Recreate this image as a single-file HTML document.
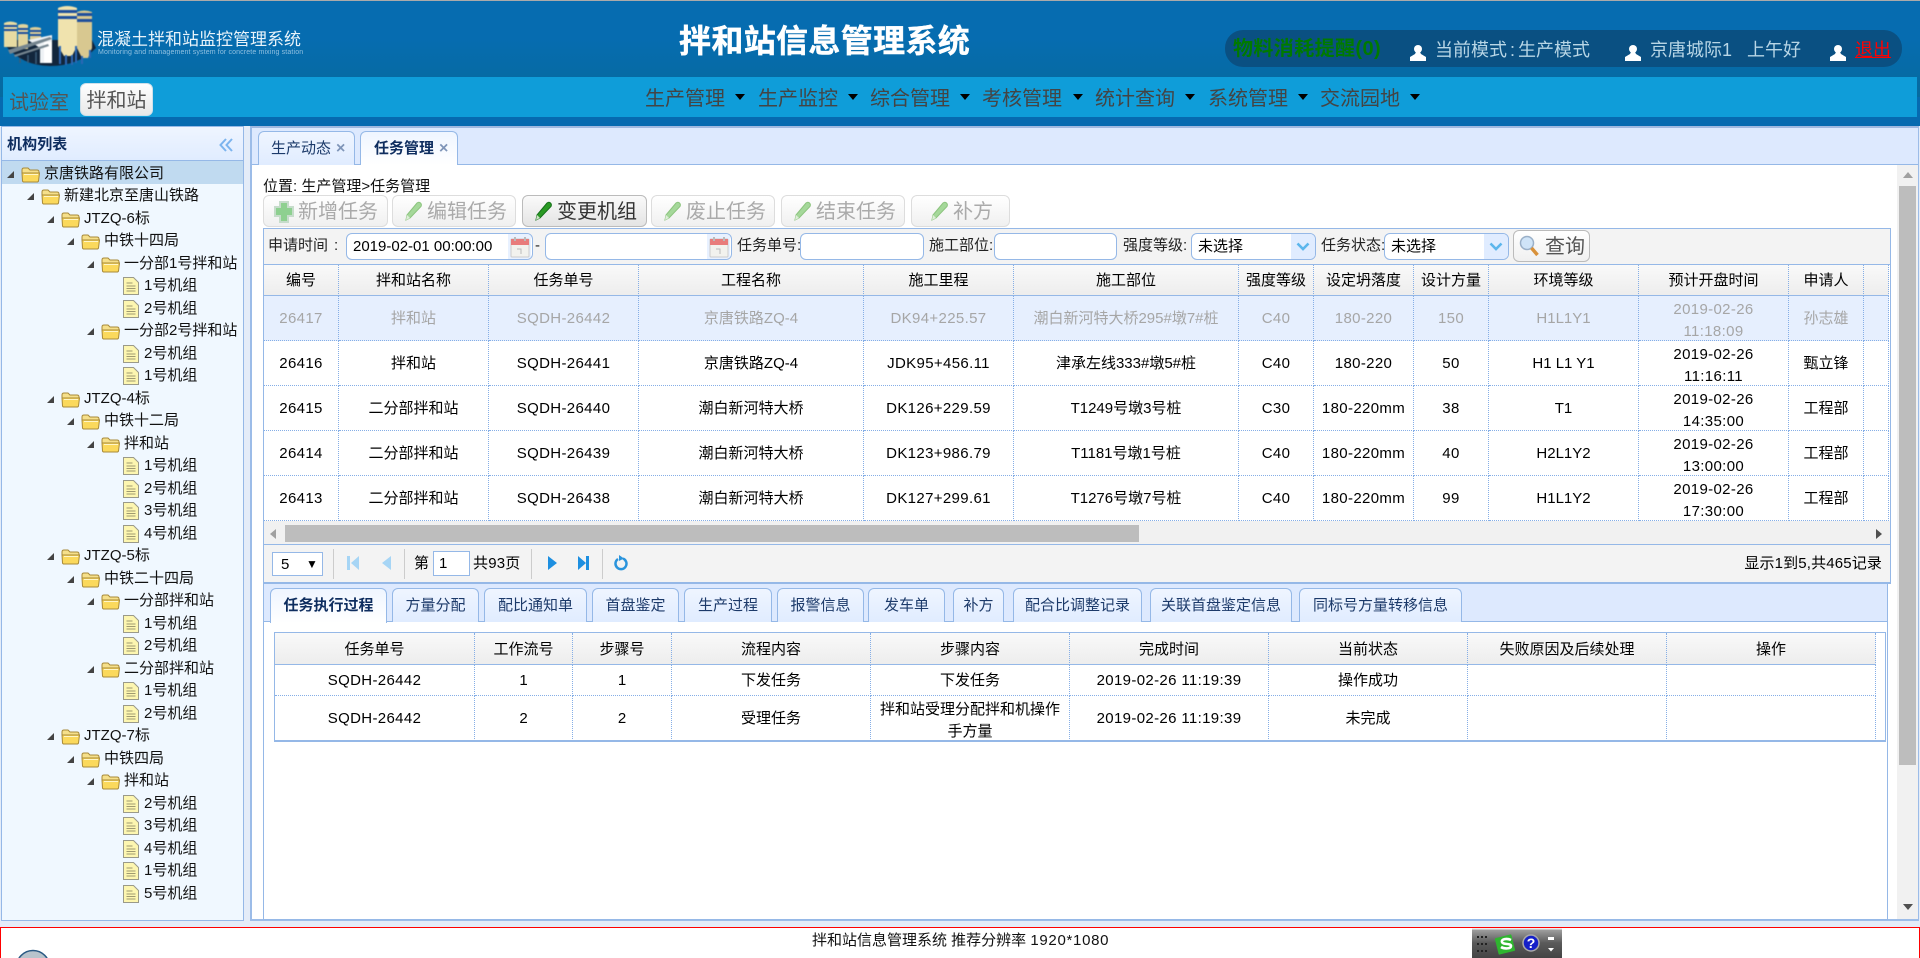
<!DOCTYPE html>
<html lang="zh-CN"><head><meta charset="utf-8"><title>拌和站信息管理系统</title>
<style>
*{box-sizing:border-box}
html,body{margin:0;padding:0}
body{width:1920px;height:958px;overflow:hidden;position:relative;background:#e4ecf8;font-family:"Liberation Sans","Noto Sans CJK SC",sans-serif;font-size:15px;color:#000}
.a{position:absolute;white-space:nowrap}
.hd{left:0;top:0;width:1920px;height:126px;background:linear-gradient(#066cb0,#066cb0 30%,#066a9e 77%,#066ab0 77%);border-top:1px solid #aaa}
.nav{left:3px;top:77px;width:1914px;height:40px;background:#0f9dd9}
.m{top:86px;font-size:20px;line-height:26px;color:#444}
.c{top:94px;width:0;height:0;border-left:5px solid transparent;border-right:5px solid transparent;border-top:6px solid #000}
.u{font-size:18px;line-height:24px;top:38px;color:#b8d6e6}
.btn{top:195px;height:32px;border:1px solid #ddd;border-radius:6px;background:linear-gradient(#fff,#f0f0f0);font-size:20px;line-height:32px;color:#aaa}
.btn svg{position:absolute;left:9px;top:4px}
.btn span{position:absolute;left:34px;top:0}
.lab{top:235px;line-height:22px;font-size:15px;color:#222}
.inp{top:233px;height:27px;background:#fff;border:1px solid #95b8e7;border-radius:6px;line-height:26px;padding-left:6px;font-size:15px;overflow:hidden}
.cal{position:absolute;right:1px;top:0;width:23px;height:25px;background:#e8f1ff}
.cal svg{position:absolute;left:2px;top:3px}
.cb{padding-left:6px}
.cb b{position:absolute;right:0;top:0;width:24px;height:25px;background:#e0ecff}
.cb b svg{position:absolute;left:5px;top:8px}
table{border-collapse:separate;border-spacing:0;table-layout:fixed}
td,th{padding:2px 0 0;text-align:center;font-weight:normal;font-size:15px;border-right:1px dotted #85aee6;border-bottom:1px dotted #85aee6;line-height:21.6px;overflow:hidden;white-space:nowrap}
th{background:linear-gradient(#f9f9f9,#ededed);border-bottom:1px solid #95b8e7}
.n{letter-spacing:.35px}
.t2{margin-bottom:-3px}
.g td{background:#e6effe;color:#a6a6a6}
.w{white-space:normal}
.r{position:relative;height:22.53px;line-height:22px;font-size:15px;padding-left:calc(44px + var(--l)*20px);white-space:nowrap;color:#111}
.r .t{position:absolute;top:8px;left:calc(7px + var(--l)*20px);width:0;height:0;border-left:7px solid transparent;border-bottom:7px solid #444}
.r .f{position:absolute;top:3px;left:calc(21px + var(--l)*20px)}
.r .d{position:absolute;top:2px;left:calc(23px + var(--l)*20px)}
.tab{top:131px;height:34px;border:1px solid #95b8e7;border-bottom:0;border-radius:6px 6px 0 0;background:linear-gradient(#eff5ff,#e0ecff);color:#1c3a6a;font-size:15px;line-height:33px}
.tab i{position:absolute;font-style:normal;top:0;color:#7f95b8;font-size:16px;font-weight:bold}
.bt{top:588px;height:34px;border:1px solid #95b8e7;border-bottom:0;border-radius:6px 6px 0 0;background:linear-gradient(#eff5ff,#e0ecff);color:#1c3a6a;font-size:15px;line-height:34px;text-align:center}
.sep{top:549px;width:1px;height:30px;background:#ccc}
</style></head><body>
<svg width="0" height="0" style="position:absolute"><defs>
<symbol id="fo" viewBox="0 0 20 17"><path d="M1 4q0-2 2-2h4l2 2h7q2 0 2 2v1H1z" fill="#f6e08a" stroke="#a88a3a"/><path d="M1 7h17.500l-1 8q-.2 1-1.500 1H3q-1.300 0-1.500-1z" fill="#fbd95c" stroke="#a88a3a"/><path d="M3 8.500h14" stroke="#fff6c8"/></symbol>
<symbol id="do" viewBox="0 0 16 18"><path d="M.5.500h10l5 5v12H.500z" fill="#fdf6b0" stroke="#9a9a8a"/><path d="M3.500 6h6M3.500 9h9M3.500 11.500h9M3.500 14h9" stroke="#a09a70"/></symbol>
<symbol id="pl" viewBox="0 0 22 24"><path d="M4 20l1-5L15 3q2-1.500 3.500 0t.5 3.500L8 18z" fill="#a5d89a" stroke="#8cc47e"/><path d="M4 20l1-5 3 3z" fill="#dfeeda"/></symbol>
<symbol id="pd" viewBox="0 0 22 24"><path d="M4 20l1-5L15 3q2-1.500 3.500 0t.5 3.500L8 18z" fill="#2a9a24" stroke="#16701a"/><path d="M4 20l1-5 3 3z" fill="#cfe3c8"/></symbol>
<symbol id="ca" viewBox="0 0 20 21"><rect x="1" y="2" width="18" height="18" rx="1" fill="#f2f2ee" stroke="#ccc"/><rect x="1" y="2" width="18" height="6" fill="#e87c7c"/><path d="M5 0v4M15 0v4" stroke="#bbb" stroke-width="2"/><path d="M7 12h4v5" fill="none" stroke="#bbb"/></symbol>
<symbol id="ch" viewBox="0 0 14 10"><path d="M1.500 1.500L7 7l5.500-5.500" fill="none" stroke="#5cb6ec" stroke-width="2.600"/></symbol>
<symbol id="us" viewBox="0 0 16 17"><circle cx="8" cy="5" r="4" fill="#fff"/><path d="M6 8h4l1 2 5 3v4H0v-4l5-3z" fill="#fff"/></symbol>
</defs></svg>

<!-- header -->
<div class="a hd"></div>
<svg class="a" style="left:0;top:0;filter:blur(.4px)" width="100" height="72" viewBox="0 0 100 72">
<path d="M4 44Q22 66 50 66 78 66 96 48L92 40H8z" fill="#12263c"/>
<g>
<path d="M4 23q6-3 13 0v24H4z" fill="#e8dba2"/><path d="M4 25h13v2H4zM4 29h13v2H4z" fill="#1f4f9c"/>
<path d="M18 25q5-2 10 0v24H18z" fill="#e2d49c"/><path d="M18 28h10v2H18zM18 32h10v2H18z" fill="#1f4f9c"/>
<path d="M30 28q5-2 11 0v12H30z" fill="#ddce98"/><path d="M30 30h11v2H30zM30 34h11v2H30z" fill="#1f4f9c"/>
<path d="M58 8q9-4 19 0v38l-5 10H64l-6-10z" fill="#f0e3ae"/><path d="M58 10h19v3H58zM58 16h19v3H58z" fill="#1f4f9c"/>
<path d="M77 12q7-3 15 0v36l-4 10H82l-5-10z" fill="#d8c890"/><path d="M77 13h15v3H77zM77 19h15v3H77z" fill="#1f4f9c"/>
<path d="M60 46v18M66 55v10M72 55v10M76 46v17M82 56v8M90 50v8" stroke="#2d68b4" stroke-width="2"/>
<path d="M28 40l24-5v28H40V48z" fill="#eef2f5"/><rect x="44" y="42" width="8" height="21" fill="#fff"/>
<path d="M8 50l42-13 2 2-42 15zM14 55l34-11 1 2-34 11z" fill="#75858f"/>
<path d="M20 58v5M28 55v8M36 52v12" stroke="#3a5c7a" stroke-width="1.500"/>
</g>
</svg>
<div class="a" style="left:97px;top:28px;font-size:17px;line-height:24px;color:#e8f3fa">混凝土拌和站监控管理系统</div>
<div class="a" style="left:98px;top:48px;font-size:7px;line-height:9px;letter-spacing:.14px;color:#8fc0e0">Monitoring and management system for concrete mixing station</div>
<div class="a" style="left:679px;top:20px;font-size:32px;line-height:42px;font-weight:bold;letter-spacing:.35px;color:#fff;-webkit-text-stroke:.4px #fff">拌和站信息管理系统</div>
<div class="a" style="left:1225px;top:30px;width:677px;height:37px;border-radius:18px;background:#0a5082"></div>
<div class="a" style="left:1233px;top:36px;font-size:20px;line-height:26px;font-weight:bold;letter-spacing:.4px;color:#007a00">物料消耗提醒(0)</div>
<svg class="a" style="left:1410px;top:44px" width="16" height="17"><use href="#us"/></svg>
<div class="a u" style="left:1435px;word-spacing:-2px">当前模式 : 生产模式</div>
<svg class="a" style="left:1625px;top:44px" width="16" height="17"><use href="#us"/></svg>
<div class="a u" style="left:1650px">京唐城际1</div>
<div class="a u" style="left:1747px">上午好</div>
<svg class="a" style="left:1830px;top:44px" width="16" height="17"><use href="#us"/></svg>
<div class="a u" style="left:1855px;color:#f00;text-decoration:underline">退出</div>

<!-- nav -->
<div class="a nav"></div>
<div class="a" style="left:9px;top:90px;font-size:20px;line-height:26px;color:#555">试验室</div>
<div class="a" style="left:80px;top:83px;width:73px;height:33px;border:1px solid #cfe0ea;border-radius:6px;background:linear-gradient(#fff,#e8e8e8);font-size:20px;line-height:35px;color:#555;text-align:center">拌和站</div>
<div class="a m" style="left:645px">生产管理</div><div class="a c" style="left:735px"></div>
<div class="a m" style="left:758px">生产监控</div><div class="a c" style="left:848px"></div>
<div class="a m" style="left:870px">综合管理</div><div class="a c" style="left:960px"></div>
<div class="a m" style="left:982px">考核管理</div><div class="a c" style="left:1073px"></div>
<div class="a m" style="left:1095px">统计查询</div><div class="a c" style="left:1185px"></div>
<div class="a m" style="left:1208px">系统管理</div><div class="a c" style="left:1298px"></div>
<div class="a m" style="left:1320px">交流园地</div><div class="a c" style="left:1410px"></div>

<!-- left panel -->
<div class="a" style="left:1px;top:126px;width:243px;height:795px;border:1px solid #95b8e7;background:#f0f8ff"></div>
<div class="a" style="left:2px;top:127px;width:241px;height:34px;background:linear-gradient(#eff5ff,#e0ecff);border-bottom:1px solid #95b8e7"></div>
<div class="a" style="left:7px;top:133px;font-size:15px;line-height:24px;font-weight:bold;letter-spacing:.1px;color:#0e2d5f">机构列表</div>
<svg class="a" style="left:219px;top:138px" width="14" height="14" viewBox="0 0 14 14"><path d="M7 1L1.500 7 7 13M13 1L7.500 7 13 13" fill="none" stroke="#7cb4ee" stroke-width="2"/></svg>
<div class="a" style="left:2px;top:161px;width:241px;height:23px;background:#c0daf0"></div>
<div class="a" style="left:0;top:162.500px;width:243px">
<div class="r" style="--l:0"><i class="t"></i><svg class="f" width="20" height="17"><use href="#fo"/></svg>京唐铁路有限公司</div>
<div class="r" style="--l:1"><i class="t"></i><svg class="f" width="20" height="17"><use href="#fo"/></svg>新建北京至唐山铁路</div>
<div class="r" style="--l:2"><i class="t"></i><svg class="f" width="20" height="17"><use href="#fo"/></svg>JTZQ-6标</div>
<div class="r" style="--l:3"><i class="t"></i><svg class="f" width="20" height="17"><use href="#fo"/></svg>中铁十四局</div>
<div class="r" style="--l:4"><i class="t"></i><svg class="f" width="20" height="17"><use href="#fo"/></svg>一分部1号拌和站</div>
<div class="r" style="--l:5"><svg class="d" width="16" height="18" style="left:123px"><use href="#do"/></svg>1号机组</div>
<div class="r" style="--l:5"><svg class="d" width="16" height="18" style="left:123px"><use href="#do"/></svg>2号机组</div>
<div class="r" style="--l:4"><i class="t"></i><svg class="f" width="20" height="17"><use href="#fo"/></svg>一分部2号拌和站</div>
<div class="r" style="--l:5"><svg class="d" width="16" height="18" style="left:123px"><use href="#do"/></svg>2号机组</div>
<div class="r" style="--l:5"><svg class="d" width="16" height="18" style="left:123px"><use href="#do"/></svg>1号机组</div>
<div class="r" style="--l:2"><i class="t"></i><svg class="f" width="20" height="17"><use href="#fo"/></svg>JTZQ-4标</div>
<div class="r" style="--l:3"><i class="t"></i><svg class="f" width="20" height="17"><use href="#fo"/></svg>中铁十二局</div>
<div class="r" style="--l:4"><i class="t"></i><svg class="f" width="20" height="17"><use href="#fo"/></svg>拌和站</div>
<div class="r" style="--l:5"><svg class="d" width="16" height="18" style="left:123px"><use href="#do"/></svg>1号机组</div>
<div class="r" style="--l:5"><svg class="d" width="16" height="18" style="left:123px"><use href="#do"/></svg>2号机组</div>
<div class="r" style="--l:5"><svg class="d" width="16" height="18" style="left:123px"><use href="#do"/></svg>3号机组</div>
<div class="r" style="--l:5"><svg class="d" width="16" height="18" style="left:123px"><use href="#do"/></svg>4号机组</div>
<div class="r" style="--l:2"><i class="t"></i><svg class="f" width="20" height="17"><use href="#fo"/></svg>JTZQ-5标</div>
<div class="r" style="--l:3"><i class="t"></i><svg class="f" width="20" height="17"><use href="#fo"/></svg>中铁二十四局</div>
<div class="r" style="--l:4"><i class="t"></i><svg class="f" width="20" height="17"><use href="#fo"/></svg>一分部拌和站</div>
<div class="r" style="--l:5"><svg class="d" width="16" height="18" style="left:123px"><use href="#do"/></svg>1号机组</div>
<div class="r" style="--l:5"><svg class="d" width="16" height="18" style="left:123px"><use href="#do"/></svg>2号机组</div>
<div class="r" style="--l:4"><i class="t"></i><svg class="f" width="20" height="17"><use href="#fo"/></svg>二分部拌和站</div>
<div class="r" style="--l:5"><svg class="d" width="16" height="18" style="left:123px"><use href="#do"/></svg>1号机组</div>
<div class="r" style="--l:5"><svg class="d" width="16" height="18" style="left:123px"><use href="#do"/></svg>2号机组</div>
<div class="r" style="--l:2"><i class="t"></i><svg class="f" width="20" height="17"><use href="#fo"/></svg>JTZQ-7标</div>
<div class="r" style="--l:3"><i class="t"></i><svg class="f" width="20" height="17"><use href="#fo"/></svg>中铁四局</div>
<div class="r" style="--l:4"><i class="t"></i><svg class="f" width="20" height="17"><use href="#fo"/></svg>拌和站</div>
<div class="r" style="--l:5"><svg class="d" width="16" height="18" style="left:123px"><use href="#do"/></svg>2号机组</div>
<div class="r" style="--l:5"><svg class="d" width="16" height="18" style="left:123px"><use href="#do"/></svg>3号机组</div>
<div class="r" style="--l:5"><svg class="d" width="16" height="18" style="left:123px"><use href="#do"/></svg>4号机组</div>
<div class="r" style="--l:5"><svg class="d" width="16" height="18" style="left:123px"><use href="#do"/></svg>1号机组</div>
<div class="r" style="--l:5"><svg class="d" width="16" height="18" style="left:123px"><use href="#do"/></svg>5号机组</div>
</div>

<!-- right panel -->
<div class="a" style="left:250px;top:126px;width:1669px;height:795px;border:2px solid #9cbce8;border-top-color:#a0b8e0;border-right-width:1px;background:#fff"></div>
<div class="a" style="left:252px;top:128px;width:1666px;height:37px;background:#dde9fe;border-bottom:1px solid #95b8e7"></div>
<div class="a tab" style="left:258px;width:97px"><span class="a" style="left:12px">生产动态</span><i style="left:77px">×</i></div>
<div class="a tab" style="left:360px;width:98px;background:linear-gradient(#eff5ff,#fff);font-weight:bold;color:#0e2d5f"><span class="a" style="left:13px">任务管理</span><i style="left:78px;font-weight:bold">×</i></div>
<div class="a" style="left:263px;top:175px;font-size:15px;line-height:24px;color:#111">位置: 生产管理&gt;任务管理</div>

<!-- v scrollbar -->
<div class="a" style="left:1897px;top:165px;width:21px;height:754px;background:#f1f1f1"></div>
<div class="a" style="left:1899px;top:186px;width:17px;height:579px;background:#bdbdbd"></div>
<div class="a" style="left:1903px;top:172px;width:0;height:0;border-left:5px solid transparent;border-right:5px solid transparent;border-bottom:6px solid #a0a0a0"></div>
<div class="a" style="left:1903px;top:904px;width:0;height:0;border-left:5px solid transparent;border-right:5px solid transparent;border-top:6px solid #505050"></div>

<!-- toolbar -->
<div class="a btn" style="left:263px;width:125px"><svg width="22" height="24" viewBox="0 0 22 24"><path d="M7 2h8v5h5v9h-5v6H7v-6H2V7h5z" fill="#8ed090" stroke="#c6dccb" stroke-width="2"/></svg><span>新增任务</span></div>
<div class="a btn" style="left:392px;width:124px"><svg width="22" height="24"><use href="#pl"/></svg><span>编辑任务</span></div>
<div class="a btn" style="left:522px;width:125px;border-color:#bbb;background:linear-gradient(#fafafa,#e4e4e4);color:#333"><svg width="22" height="24"><use href="#pd"/></svg><span>变更机组</span></div>
<div class="a btn" style="left:651px;width:124px"><svg width="22" height="24"><use href="#pl"/></svg><span>废止任务</span></div>
<div class="a btn" style="left:781px;width:124px"><svg width="22" height="24"><use href="#pl"/></svg><span>结束任务</span></div>
<div class="a btn" style="left:911px;width:99px"><svg width="22" height="24" style="left:16px"><use href="#pl"/></svg><span style="left:41px">补方</span></div>

<!-- filter bar -->
<div class="a" style="left:263px;top:228px;width:1628px;height:356px;border:1px solid #95b8e7;background:#f3f3f3"></div>
<div class="a lab" style="left:268px">申请时间</div><div class="a lab" style="left:334px">:</div>
<div class="a inp" style="left:346px;width:187px">2019-02-01 00:00:00<span class="cal"><svg width="20" height="21"><use href="#ca"/></svg></span></div>
<div class="a lab" style="left:535px">-</div>
<div class="a inp" style="left:545px;width:187px"><span class="cal"><svg width="20" height="21"><use href="#ca"/></svg></span></div>
<div class="a lab" style="left:737px">任务单号:</div>
<div class="a inp" style="left:800px;width:124px"></div>
<div class="a lab" style="left:929px">施工部位:</div>
<div class="a inp" style="left:994px;width:123px"></div>
<div class="a lab" style="left:1123px">强度等级:</div>
<div class="a inp cb" style="left:1191px;width:125px">未选择<b><svg width="14" height="10"><use href="#ch"/></svg></b></div>
<div class="a lab" style="left:1321px">任务状态:</div>
<div class="a inp cb" style="left:1384px;width:125px">未选择<b><svg width="14" height="10"><use href="#ch"/></svg></b></div>
<div class="a btn" style="left:1513px;top:230px;width:77px;border-color:#bbb;background:linear-gradient(#fff,#f0f0f0);color:#555;font-size:20px"><svg width="20" height="22" viewBox="0 0 20 22" style="left:5px;top:4px"><circle cx="8" cy="8" r="6.500" fill="#cfe4f8" stroke="#9ab0c8" stroke-width="1.500"/><path d="M12.500 13l6 7" stroke="#d8913a" stroke-width="3.500"/></svg><span style="left:31px">查询</span></div>

<!-- grid -->
<div class="a" style="left:264px;top:264px;width:1626px;height:257px;overflow:hidden;background:#fff;border-top:1px solid #95b8e7">
<table style="width:1625px">
<colgroup><col style="width:75px"><col style="width:150px"><col style="width:150px"><col style="width:225px"><col style="width:150px"><col style="width:225px"><col style="width:75px"><col style="width:100px"><col style="width:75px"><col style="width:150px"><col style="width:150px"><col style="width:75px"><col style="width:25px"></colgroup>
<tr style="height:31px"><th>编号</th><th>拌和站名称</th><th>任务单号</th><th>工程名称</th><th>施工里程</th><th>施工部位</th><th>强度等级</th><th>设定坍落度</th><th>设计方量</th><th>环境等级</th><th>预计开盘时间</th><th>申请人</th><th></th></tr>
<tr class="g" style="height:45px"><td class="n">26417</td><td>拌和站</td><td class="n">SQDH-26442</td><td>京唐铁路ZQ-4</td><td class="n">DK94+225.57</td><td>潮白新河特大桥295#墩7#桩</td><td class="n">C40</td><td class="n">180-220</td><td class="n">150</td><td>H1L1Y1</td><td class="n"><div class="t2">2019-02-26<br>11:18:09</div></td><td>孙志雄</td><td></td></tr>
<tr style="height:45px"><td class="n">26416</td><td>拌和站</td><td class="n">SQDH-26441</td><td>京唐铁路ZQ-4</td><td class="n">JDK95+456.11</td><td>津承左线333#墩5#桩</td><td class="n">C40</td><td class="n">180-220</td><td class="n">50</td><td>H1 L1 Y1</td><td class="n"><div class="t2">2019-02-26<br>11:16:11</div></td><td>甄立锋</td><td></td></tr>
<tr style="height:45px"><td class="n">26415</td><td>二分部拌和站</td><td class="n">SQDH-26440</td><td>潮白新河特大桥</td><td class="n">DK126+229.59</td><td>T1249号墩3号桩</td><td class="n">C30</td><td class="n">180-220mm</td><td class="n">38</td><td>T1</td><td class="n"><div class="t2">2019-02-26<br>14:35:00</div></td><td>工程部</td><td></td></tr>
<tr style="height:45px"><td class="n">26414</td><td>二分部拌和站</td><td class="n">SQDH-26439</td><td>潮白新河特大桥</td><td class="n">DK123+986.79</td><td>T1181号墩1号桩</td><td class="n">C40</td><td class="n">180-220mm</td><td class="n">40</td><td>H2L1Y2</td><td class="n"><div class="t2">2019-02-26<br>13:00:00</div></td><td>工程部</td><td></td></tr>
<tr style="height:45px"><td class="n">26413</td><td>二分部拌和站</td><td class="n">SQDH-26438</td><td>潮白新河特大桥</td><td class="n">DK127+299.61</td><td>T1276号墩7号桩</td><td class="n">C40</td><td class="n">180-220mm</td><td class="n">99</td><td>H1L1Y2</td><td class="n"><div class="t2">2019-02-26<br>17:30:00</div></td><td>工程部</td><td></td></tr>
</table></div>

<!-- h scrollbar -->
<div class="a" style="left:264px;top:521px;width:1626px;height:23px;background:#f1f1f1"></div>
<div class="a" style="left:285px;top:525px;width:854px;height:17px;background:#bdbdbd"></div>
<div class="a" style="left:270px;top:529px;width:0;height:0;border-top:5px solid transparent;border-bottom:5px solid transparent;border-right:6px solid #a0a0a0"></div>
<div class="a" style="left:1876px;top:529px;width:0;height:0;border-top:5px solid transparent;border-bottom:5px solid transparent;border-left:6px solid #505050"></div>

<!-- pager -->
<div class="a" style="left:264px;top:544px;width:1626px;height:1px;background:#95b8e7"></div>
<div class="a" style="left:272px;top:552px;width:51px;height:24px;border:1px solid #95b8e7;background:#fff;line-height:23px;padding-left:8px;font-size:15px">5<span class="a" style="left:33px;top:0;font-size:12px;line-height:22px">▼</span></div>
<div class="a sep" style="left:333px"></div><div class="a sep" style="left:404px"></div><div class="a sep" style="left:531px"></div><div class="a sep" style="left:602px"></div>
<svg class="a" style="left:347px;top:556px" width="12" height="14"><path d="M0 0h3v14H0zM12 0v14L4 7z" fill="#a6d5f5"/></svg>
<svg class="a" style="left:382px;top:556px" width="10" height="14"><path d="M9 0v14L0 7z" fill="#a6d5f5"/></svg>
<div class="a" style="left:414px;top:553px;line-height:22px">第</div>
<div class="a" style="left:433px;top:551px;width:37px;height:25px;border:1px solid #95b8e7;background:#fff;line-height:24px;padding-left:5px">1</div>
<div class="a" style="left:473px;top:553px;line-height:22px;letter-spacing:.2px">共93页</div>
<svg class="a" style="left:547px;top:556px" width="10" height="14"><path d="M1 0v14l9-7z" fill="#1d8fe0"/></svg>
<svg class="a" style="left:578px;top:556px" width="11" height="14"><path d="M0 0v14l8-7zM8 0h3v14H8z" fill="#1d8fe0"/></svg>
<svg class="a" style="left:614px;top:555px" width="15" height="16" viewBox="0 0 15 16"><path d="M9 3.500A5.500 5.500 0 1 1 4 4" fill="none" stroke="#2a94dc" stroke-width="2.500"/><path d="M5 0l5 3.500L5 6z" fill="#2a94dc"/></svg>
<div class="a" style="right:38px;top:553px;line-height:22px;letter-spacing:.15px">显示1到5,共465记录</div>
<div class="a" style="left:263px;top:582px;width:1628px;height:2px;background:#95b8e7"></div>

<!-- bottom tabs -->
<div class="a" style="left:263px;top:584px;width:1625px;height:336px;border:1px solid #95b8e7;border-top:0;background:#fff"></div>
<div class="a" style="left:264px;top:584px;width:1623px;height:38px;background:#dde9fe;border-bottom:1px solid #95b8e7"></div>
<div class="a bt" style="left:270px;width:117px;height:35px;background:linear-gradient(#eff5ff,#fff);font-weight:bold;color:#0e2d5f">任务执行过程</div>
<div class="a bt" style="left:392px;width:87px">方量分配</div>
<div class="a bt" style="left:484px;width:103px">配比通知单</div>
<div class="a bt" style="left:592px;width:87px">首盘鉴定</div>
<div class="a bt" style="left:684px;width:88px">生产过程</div>
<div class="a bt" style="left:777px;width:87px">报警信息</div>
<div class="a bt" style="left:868px;width:77px">发车单</div>
<div class="a bt" style="left:953px;width:51px">补方</div>
<div class="a bt" style="left:1013px;width:129px">配合比调整记录</div>
<div class="a bt" style="left:1150px;width:142px">关联首盘鉴定信息</div>
<div class="a bt" style="left:1299px;width:163px">同标号方量转移信息</div>

<!-- inner table -->
<div class="a" style="left:274px;top:632px;width:1612px;height:110px;border:1px solid #95b8e7;border-width:1px 1px 2px 1px;overflow:hidden;background:#fff">
<table style="width:1601px">
<colgroup><col style="width:200px"><col style="width:98px"><col style="width:99px"><col style="width:199px"><col style="width:199px"><col style="width:199px"><col style="width:199px"><col style="width:199px"><col style="width:209px"></colgroup>
<tr style="height:32px"><th>任务单号</th><th>工作流号</th><th>步骤号</th><th>流程内容</th><th>步骤内容</th><th>完成时间</th><th>当前状态</th><th>失败原因及后续处理</th><th>操作</th></tr>
<tr style="height:31px"><td class="n">SQDH-26442</td><td>1</td><td>1</td><td>下发任务</td><td>下发任务</td><td class="n">2019-02-26 11:19:39</td><td>操作成功</td><td></td><td></td></tr>
<tr style="height:45px"><td class="n">SQDH-26442</td><td>2</td><td>2</td><td>受理任务</td><td class="w" style="padding:2px 8px 0"><div class="t2">拌和站受理分配拌和机操作手方量</div></td><td class="n">2019-02-26 11:19:39</td><td>未完成</td><td></td><td></td></tr>
</table></div>

<!-- footer -->
<div class="a" style="left:0;top:927px;width:1920px;height:31px;background:#fff;border:1px solid #f00;border-bottom:0"></div>
<div class="a" style="left:812px;top:930px;line-height:22px;font-size:15px;color:#111">拌和站信息管理系统 推荐分辨率 <span style="letter-spacing:.7px">1920*1080</span></div>
<svg class="a" style="left:16px;top:949px" width="36" height="9"><circle cx="17" cy="18" r="16.500" fill="#b8c4cc" stroke="#2a5a84" stroke-width="1.500"/><circle cx="17" cy="18" r="7" fill="#b84a3a"/></svg>
<svg class="a" style="left:1472px;top:928px" width="90" height="30" viewBox="0 0 90 30">
<defs><linearGradient id="sg" x1="0" y1="0" x2="0" y2="1"><stop offset="0" stop-color="#a8a8a8"/><stop offset=".5" stop-color="#5a5a5a"/><stop offset="1" stop-color="#444"/></linearGradient></defs>
<rect width="90" height="30" fill="url(#sg)"/><rect width="90" height="1.500" fill="#eee"/>
<path d="M5 8h2v2H5zM9 8h2v2H9zM13 8h2v2h-2zM5 15h2v2H5zM9 15h2v2H9zM13 15h2v2h-2zM5 22h2v2H5zM9 22h2v2H9zM13 22h2v2h-2z" fill="#222"/>
<rect x="24.500" y="8" width="17" height="17" rx="1" transform="rotate(-14 33 16.500)" fill="#2fb52f"/>
<path d="M39 12c-4-2-10-1-9 2s9 1 9 4-7 3-10 1" fill="none" stroke="#fff" stroke-width="2.600"/>
<circle cx="59" cy="15" r="8" fill="#1520c8" stroke="#aaa" stroke-width="1.500"/>
<text x="59" y="20" text-anchor="middle" font-family="Liberation Sans,sans-serif" font-size="14" font-weight="bold" fill="#fff">?</text>
<rect x="76" y="9" width="6" height="3" fill="#fff"/><path d="M76 20h6l-3 3.500z" fill="#fff"/>
</svg>
</body></html>
